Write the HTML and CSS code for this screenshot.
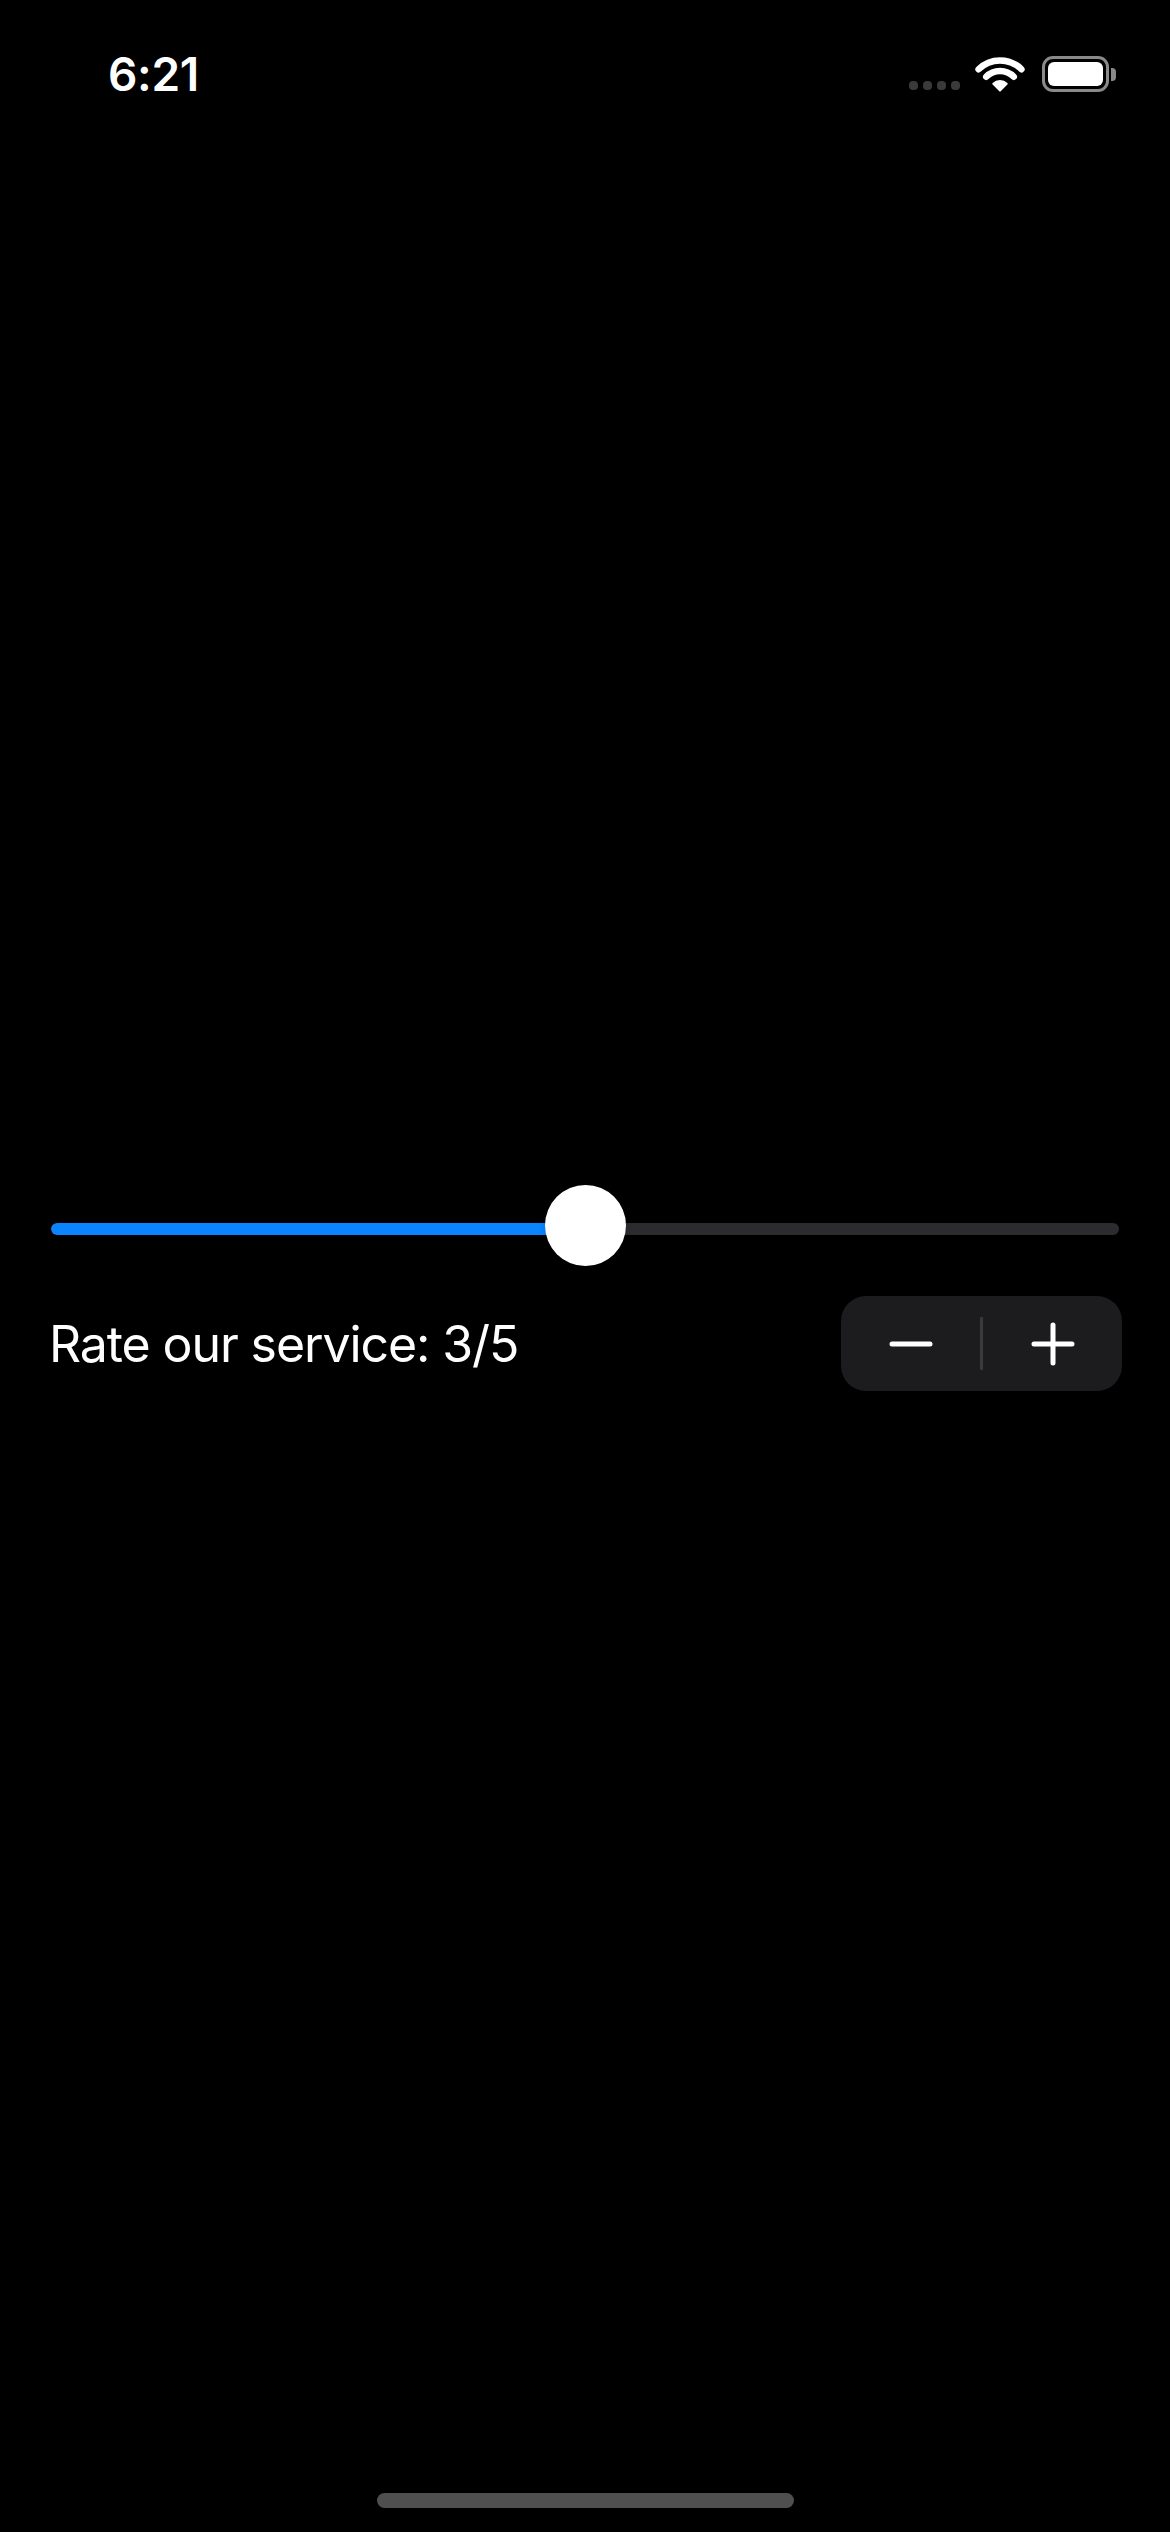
FILE: index.html
```html
<!DOCTYPE html>
<html lang="en">
<head>
<meta charset="utf-8">
<title>Rate our service</title>
<link rel="stylesheet" href="styles.css">
</head>
<body>
<div class="screen">
  <header class="status-bar">
    <span class="time">6:21</span>
    <div class="status-icons">
      <div class="signal">
        <span class="dot"></span><span class="dot"></span><span class="dot"></span><span class="dot"></span>
      </div>
      <svg class="wifi" width="50" height="36" viewBox="0 0 50 36" aria-hidden="true">
        <path d="M3.6 13.2 A30.5 30.5 0 0 1 46.4 13.2" fill="none" stroke="#fff" stroke-width="6.5" stroke-linecap="round"/>
        <path d="M11.2 20.8 A19.5 19.5 0 0 1 38.8 20.8" fill="none" stroke="#fff" stroke-width="6.5" stroke-linecap="round"/>
        <path d="M25 34.5 L18.3 27.8 A9.5 9.5 0 0 1 31.7 27.8 Z" fill="#fff" stroke="#fff" stroke-width="2" stroke-linejoin="round"/>
      </svg>
      <div class="battery">
        <div class="battery-body"><div class="battery-level"></div></div>
        <div class="battery-cap"></div>
      </div>
    </div>
  </header>

  <main class="content">
    <div class="slider">
      <div class="track"><div class="fill" style="width:50%"></div></div>
      <div class="thumb" style="left:calc(50% - 40.5px)"></div>
    </div>

    <div class="rating-row">
      <span class="rating-label">Rate our service: 3/5</span>
      <div class="stepper">
        <button class="step-btn" aria-label="Decrease">
          <svg width="44" height="44" viewBox="0 0 44 44"><path d="M3 22 H41" stroke="#fff" stroke-width="5" stroke-linecap="round"/></svg>
        </button>
        <span class="step-divider"></span>
        <button class="step-btn" aria-label="Increase">
          <svg width="44" height="44" viewBox="0 0 44 44"><path d="M3 22 H41 M22 3 V41" stroke="#fff" stroke-width="5" stroke-linecap="round"/></svg>
        </button>
      </div>
    </div>
  </main>

  <footer class="home-area">
    <div class="home-indicator"></div>
  </footer>
</div>
</body>
</html>
```

FILE: styles.css
```css
* { box-sizing: border-box; }

html, body {
  margin: 0;
  padding: 0;
  background: #000;
}

body {
  font-family: Inter, "Noto Sans", "Liberation Sans", sans-serif;
  color: #fff;
}

.screen {
  width: 1170px;
  min-height: 2532px;
  display: flex;
  flex-direction: column;
  background: #000;
}

.status-bar {
  height: 148px;
  display: flex;
  align-items: center;
  justify-content: space-between;
  padding: 0 54px 0 108px;
}

.time {
  font-size: 46px;
  font-weight: 600;
  letter-spacing: -0.3px;
  line-height: 1;
}

.status-icons {
  display: flex;
  align-items: center;
}

.signal {
  display: flex;
  gap: 5px;
  align-items: flex-end;
  align-self: flex-end;
  margin-bottom: 2px;
  margin-right: 15px;
}

.dot {
  width: 9px;
  height: 9px;
  border-radius: 4px;
  background: #3a3a3a;
}

.wifi {
  display: block;
  margin-right: 17px;
}

.battery {
  display: flex;
  align-items: center;
}

.battery-body {
  width: 67px;
  height: 36px;
  border: 3px solid #8a8a8a;
  border-radius: 11px;
  padding: 3px;
}

.battery-level {
  width: 100%;
  height: 100%;
  background: #fff;
  border-radius: 6px;
}

.battery-cap {
  width: 5px;
  height: 13px;
  margin-left: 2px;
  background: #8a8a8a;
  border-radius: 0 4px 4px 0;
}

.content {
  padding: 0 48px 0 51px;
}

.slider {
  position: relative;
  height: 81px;
  margin-top: 1037px;
  margin-right: 3px;
  display: flex;
  align-items: center;
}

.track {
  flex: 1;
  height: 12px;
  border-radius: 6px;
  background: #2c2c2e;
  overflow: hidden;
  margin-top: 6px;
}

.fill {
  height: 100%;
  background: #0a84ff;
  border-radius: 6px 0 0 6px;
}

.thumb {
  position: absolute;
  top: 0;
  width: 81px;
  height: 81px;
  border-radius: 50%;
  background: #fff;
  box-shadow: 0 2px 6px rgba(0, 0, 0, 0.15);
}

.rating-row {
  margin-top: 30px;
  display: flex;
  align-items: center;
  justify-content: space-between;
}

.rating-label {
  font-size: 50px;
  font-weight: 400;
  letter-spacing: -1.1px;
  line-height: 1.2;
  margin-left: -2px;
}

.stepper {
  width: 281px;
  height: 95px;
  border-radius: 25px;
  background: #1c1c1e;
  display: flex;
  align-items: center;
}

.step-btn {
  flex: 1;
  height: 100%;
  border: 0;
  padding: 0;
  background: transparent;
  display: flex;
  align-items: center;
  justify-content: center;
}

.step-btn svg { display: block; }

.step-divider {
  width: 3px;
  height: 53px;
  background: #3a3a3c;
  border-radius: 1px;
}

.home-area {
  margin-top: auto;
  display: flex;
  justify-content: center;
  padding-bottom: 24px;
}

.home-indicator {
  width: 417px;
  height: 15px;
  border-radius: 8px;
  background: #4f4f4f;
}
```
